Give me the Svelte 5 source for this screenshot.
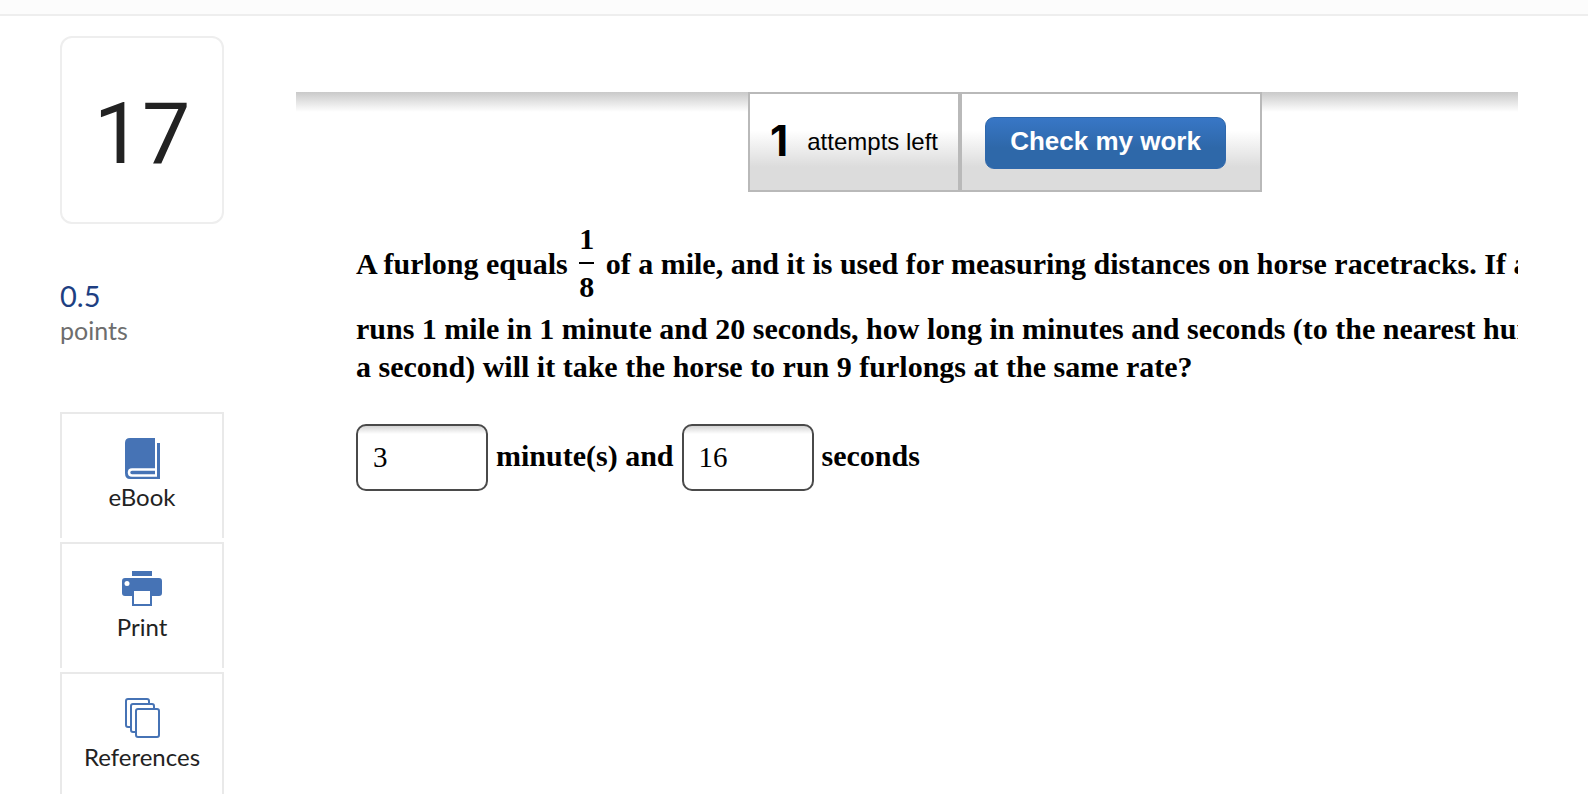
<script lang="ts">
  let questionNumber = 17;
  let points = "0.5";
  let attemptsLeft = $state(1);
  let minutes = $state("3");
  let seconds = $state("16");

  function checkWork() {
    if (attemptsLeft > 0) attemptsLeft -= 1;
  }
</script>

<div class="page">
  <div class="top-strip"></div>

  <div class="layout">
    <aside class="sidebar">
      <div class="number-card">{questionNumber}</div>

      <div class="points">
        <span class="points-value">{points}</span>
        <span class="points-label">points</span>
      </div>

      <nav class="tools">
        <button class="tool">
          <svg width="40" height="44" viewBox="0 0 40 44">
            <path fill="#4673b5" d="M8 2H33V40H35V7H38V43H8Q3 43 3 37V7Q3 2 8 2Z" />
            <path fill="none" stroke="#fff" stroke-width="2.500" d="M34 33.500H10Q7 33.500 7 36.500Q7 39.500 10 39.500H35" />
            <path fill="#fff" d="M33 2H35V40H33Z" />
          </svg>
          <span>eBook</span>
        </button>
        <button class="tool">
          <svg width="40" height="44" viewBox="0 0 40 44">
            <path fill="#4673b5" d="M10 5H30V10H10ZM3 12H37Q40 12 40 15V27Q40 30 37 30H30V40H10V30H3Q0 30 0 27V15Q0 12 3 12Z" />
            <path fill="#fff" d="M12 25H28V38H12Z" />
            <circle cx="5" cy="17.500" r="2.500" fill="#fff" />
          </svg>
          <span>Print</span>
        </button>
        <button class="tool">
          <svg width="40" height="44" viewBox="0 0 40 44" fill="#fff" stroke="#4673b5" stroke-width="2">
            <rect x="4" y="3" width="23" height="28" rx="2" />
            <rect x="9" y="8" width="23" height="28" rx="2" />
            <rect x="14" y="13" width="23" height="28" rx="2" />
          </svg>
          <span>References</span>
        </button>
      </nav>
    </aside>

    <main class="content">
      <div class="action-bar">
        <div class="panel attempts">
          <strong>{attemptsLeft}</strong>
          <span>attempts left</span>
        </div>
        <div class="panel check">
          <button class="check-button" onclick={checkWork}>Check my work</button>
        </div>
      </div>

      <div class="question">
        <p>
          A furlong equals
          <span class="fraction"><span class="numerator">1</span><span class="denominator">8</span></span>
          of a mile, and it is used for measuring distances on horse racetracks. If a horse<br />
          runs 1 mile in 1 minute and 20 seconds, how long in minutes and seconds (to the nearest hundredth of<br />
          a second) will it take the horse to run 9 furlongs at the same rate?
        </p>

        <div class="answer">
          <input id="minutes" type="text" bind:value={minutes} />
          <label for="minutes">minute(s) and</label>
          <input id="seconds" type="text" bind:value={seconds} />
          <label for="seconds">seconds</label>
        </div>
      </div>
    </main>
  </div>
</div>

<style>
  :global(body) {
    background: #fff;
  }

  .page {
    height: 100vh;
    overflow: hidden;
    display: flex;
    flex-direction: column;
    font-family: Lato, "Liberation Sans", sans-serif;
    color: #222;
  }

  .top-strip {
    flex: none;
    height: 14px;
    background: #fcfcfc;
    border-bottom: 2px solid #eee;
  }

  .layout {
    display: flex;
    gap: 72px;
    padding: 20px 70px 0 60px;
  }

  .sidebar {
    flex: none;
    width: 164px;
  }

  .number-card {
    box-sizing: border-box;
    height: 188px;
    border: 2px solid #eee;
    border-radius: 12px;
    padding-top: 8px;
    display: flex;
    align-items: center;
    justify-content: center;
    font-family: Roboto, "Liberation Sans", sans-serif;
    font-size: 86px;
    line-height: 100px;
  }

  .points {
    display: flex;
    flex-direction: column;
    margin: 52px 0 68px;
  }

  .points-value {
    font-size: 29px;
    line-height: 40px;
    color: #1e3f82;
  }

  .points-label {
    font-size: 25px;
    line-height: 28px;
    color: #6d6d6d;
  }

  .tools {
    display: flex;
    flex-direction: column;
    gap: 4px;
  }

  .tool {
    box-sizing: border-box;
    height: 126px;
    border: 2px solid #e9e9e9;
    border-bottom: 0;
    background: #fff;
    padding: 22px 0 0;
    display: flex;
    flex-direction: column;
    align-items: center;
    font-family: inherit;
    font-size: 24px;
    line-height: 34px;
    color: #222;
    cursor: pointer;
  }

  .content {
    flex: 1;
    min-width: 0;
    overflow: hidden;
    padding-top: 56px;
  }

  .action-bar {
    display: flex;
    justify-content: flex-end;
    padding-right: 256px;
    background: linear-gradient(#c9c9c9, #fff) no-repeat 0 0 / 100% 20px;
    font-family: "Liberation Sans", Arial, sans-serif;
    color: #000;
  }

  .panel {
    box-sizing: border-box;
    height: 100px;
    border: 2px solid #b9b9b9;
    background: linear-gradient(#fff 38%, #dcdcdc 76%);
    display: flex;
    align-items: center;
    font-size: 24px;
  }

  .attempts {
    justify-content: space-between;
    width: 212px;
    padding: 0 20px;
  }

  .attempts strong {
    font-family: Inter, "Liberation Sans", sans-serif;
    font-size: 42px;
    line-height: 48px;
    padding-bottom: 2px;
  }

  .check {
    width: 302px;
    padding: 2px 0 0 23px;
  }

  .check-button {
    width: 241px;
    height: 52px;
    border: 1px solid #2f68ac;
    border-radius: 9px;
    padding: 0 0 4px;
    background: linear-gradient(#3877c6, #2e68a9 60%);
    color: #fff;
    font-family: inherit;
    font-size: 26px;
    font-weight: 700;
    cursor: pointer;
  }

  .question {
    padding: 28px 0 0 60px;
    font-family: "Liberation Serif", "Times New Roman", serif;
    font-size: 30px;
    font-weight: 700;
    line-height: 38px;
    color: #000;
    white-space: nowrap;
  }

  p {
    margin: 0;
  }

  .fraction {
    display: inline-flex;
    flex-direction: column;
    vertical-align: 25px;
    margin: 0 4px;
    text-align: center;
  }

  .numerator {
    padding-bottom: 4px;
  }

  .denominator {
    border-top: 2px solid #000;
    padding: 4px 0;
  }

  .answer {
    display: flex;
    align-items: center;
    gap: 8px;
    margin-top: 38px;
  }

  .answer label {
    padding-bottom: 4px;
  }

  input {
    box-sizing: border-box;
    width: 132px;
    height: 67px;
    border: 2px solid #4a4a4a;
    border-radius: 10px;
    padding: 0 15px;
    background: linear-gradient(#d4d4d4, #fff) no-repeat 0 0 / 100% 8px;
    font-family: inherit;
    font-size: 29px;
    color: #000;
  }
</style>
